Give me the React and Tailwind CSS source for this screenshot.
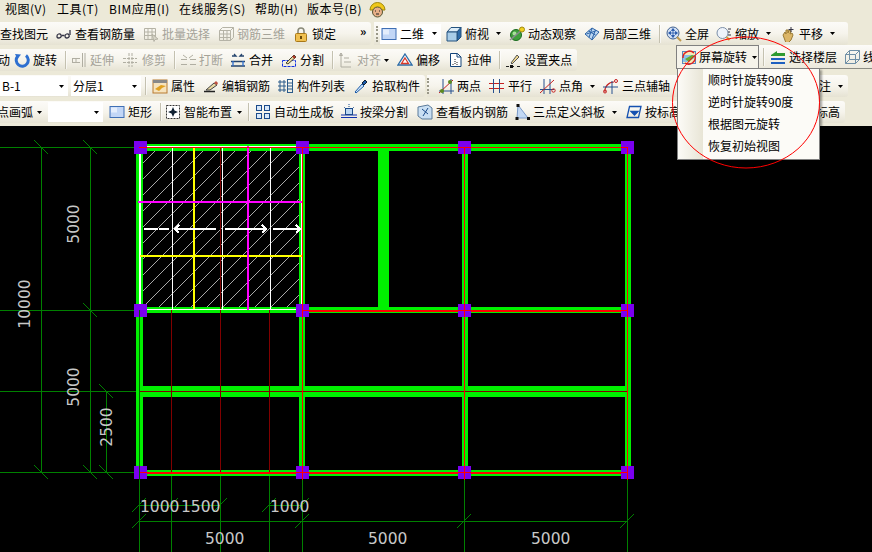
import { useId } from 'react'

const Svg = ({ children, w = 16 }) => (
  <svg width={w} height="16" viewBox={`0 0 ${w} 16`} className="shrink-0 block">{children}</svg>
)

// toolbar icons, drawn by hand since they are old XP style bitmaps
const icons = {
  glasses: <g fill="none" stroke="#334" strokeWidth="1.3"><path d="M1 10c0-2 3-3 4-1s-1 3-2.5 3S1 11 1 10z" /><path d="M9 10c0-2 3-3 4-1s-1 3-2.5 3S9 11 9 10z" /><path d="M5.5 9.5L8.5 9.5M14 9l0-5" /></g>,
  batch: <g fill="none" stroke="#b5b3a6"><path d="M1.5 2.5h11v11h-11zM1.5 6h11M1.5 9.5h11M5 2.5v11M9 2.5v11" /><path d="M9 8l6 5-3 .5-1 2z" fill="#d8d6c8" /></g>,
  rebar3d: <g fill="none" stroke="#b5b3a6"><path d="M1.5 4.5h11v10h-11zM1.5 4.5l3-3h11l-3 3M15.5 1.5v10l-3 3M1.5 8h11M1.5 11.5h11M5.5 4.5v10M9 4.5v10" /></g>,
  lock: <g><path d="M5 8V5a3 3 0 016 0v3" fill="none" stroke="#8a8a7a" strokeWidth="1.6" /><rect x="2.5" y="7.5" width="11" height="8" rx="1" fill="#f0c050" stroke="#a87818" /><rect x="7" y="10" width="2" height="3" fill="#6b4a08" /></g>,
  rect: <g><rect x="1" y="2.5" width="14" height="11" fill="#c2d6f6" stroke="#3f6fb5" /><rect x="2" y="3.5" width="6" height="5" fill="#e4edfc" /></g>,
  cube: <g stroke="#24527f"><path d="M1 6l4-4.500h10L11 6z" fill="#dcecf7" /><path d="M11 6l4-4.500V11l-4 4z" fill="#2e6ba8" /><path d="M1 6h10v9H1z" fill="#a9cde8" /></g>,
  orbit: <g><circle cx="7" cy="9" r="5.500" fill="#3f9f3c" stroke="#1b6a1e" /><circle cx="5.500" cy="7.500" r="2" fill="#a8e09a" /><path d="M1 14L14 3" stroke="#8a8a90" strokeWidth="1.500" /><circle cx="13" cy="3.500" r="2.500" fill="#f0d020" stroke="#a08a10" /></g>,
  local3d: <g fill="#bcd7f2" stroke="#2b62a6"><path d="M1 8l7-6 7 4-7 8z" /><path d="M4.500 5l7 4M8 2.500l-3 9M11.500 4l-3.500 9M2.500 8l9-3" fill="none" /></g>,
  full: <g><circle cx="7" cy="7" r="6" fill="#d5e2f5" stroke="#40608f" /><path d="M11 11l4 4" stroke="#c09a50" strokeWidth="2" /><path d="M7 3v8M3 7h8M7 2.500L5.500 4.500h3zM7 11.500L5.500 9.500h3zM2.500 7l2-1.500v3zM11.500 7l-2-1.500v3z" fill="#2555a8" stroke="#2555a8" strokeWidth=".8" /></g>,
  zoom: <g><circle cx="6.500" cy="7" r="5.500" fill="#eef3fb" stroke="#7c8fa8" /><path d="M10.500 11l3 3" stroke="#d0a040" strokeWidth="2" /><path d="M12 3h3M12 6h2M12 9h3" stroke="#334" strokeWidth="1.200" /></g>,
  pan: <g><path d="M3 9l2-3 1 2V4h2v3l1-3 2 1-1 3 2-1 1 2-2 5-3 3H6z" fill="#dcb667" stroke="#9a7b35" /><path d="M11 1v5M8.500 3.500h5" stroke="#334" strokeWidth="1" /></g>,
  rotate: <g><path d="M3.500 4.500A6 6 0 1 0 12 3.500" fill="none" stroke="#2e6fd0" strokeWidth="3" /><path d="M1 2l6 .5-3.500 4.500z" fill="#2e6fd0" /></g>,
  extend: <g fill="none" stroke="#b0aea2"><path d="M1 6.500h8M1 10.500h8M1.500 6.500v4M5 6.500v4" /><path d="M11.500 1v14M14 1v14" /></g>,
  trim: <g fill="none" stroke="#b0aea2"><path d="M0 6.500h14M0 10.500h14M6 1v14M9 1v14" strokeDasharray="3 1" /></g>,
  break: <g fill="none" stroke="#b0aea2"><path d="M1 12.500h6M10 12.500h6M1 7.500h6M10 7.500h6M3 3l4 3M13 3l-4 3" /></g>,
  merge: <g fill="none" stroke="#24446e" strokeWidth="1.300"><path d="M1 9.500h14M1 14h14" /><path d="M2 4h4l-2-2M14 4h-4l2-2" /><path d="M3 9v5M13 9v5" stroke="#2e6fd0" /></g>,
  split: <g><rect x="1.500" y="8.500" width="13" height="6" fill="none" stroke="#1030e0" strokeDasharray="3 1" /><path d="M5 11l8-8 2 2-8 7z" fill="#e8d8a0" stroke="#443" /><path d="M12 4l2 2" stroke="#b03020" strokeWidth="2" /></g>,
  align: <g fill="none" stroke="#b0aea2"><path d="M3 1v14h10" /><path d="M3 1L1.500 3.500h3zM6 6h5M6 10h7" fill="#ccc" /></g>,
  offset: <g><path d="M8 2l7 11H1z" fill="#f4f7fb" stroke="#2d6ca8" strokeWidth="1.300" /><path d="M8 6l3.500 5.500h-7z" fill="#fff" stroke="#d83a2a" strokeWidth="1.300" /></g>,
  stretch: <g fill="none" stroke="#14447a"><path d="M2.500 1.500h7l3.500 3.500v9.500h-10.500z" fill="#fff" /><path d="M9 1.500V5h4" /><path d="M7 7v6M9 10v3M5 12v1" stroke="#222" strokeDasharray="1 1" /></g>,
  grip: <g><path d="M1 14.500h3M7 14.500h2M12 14.500h3" stroke="#222" /><rect x="5" y="13" width="3" height="3" fill="#111" /><path d="M6 11l6-8 2 2-7 7z" fill="#f0d890" stroke="#555" /></g>,
  props: <g><rect x="1" y="2" width="14" height="13" fill="#f6e3bd" stroke="#b87a30" /><rect x="1" y="2" width="14" height="3" fill="#888" /><path d="M3 11l6-4 5 1-4 2-3 3z" fill="#e0a020" /></g>,
  edit: <g><path d="M1 13.500h11" stroke="#222" strokeWidth="1.300" /><path d="M3 12l8-7 3 2-7 5z" fill="#e8d8a0" stroke="#444" /><path d="M11 5l3 2 1-2-2-2z" fill="#c05040" /></g>,
  list: <g fill="none" stroke="#2a5a8a"><rect x="9.500" y="1.500" width="5" height="13" /><path d="M1 3h2v2H1zM1 7h2v2H1zM1 11h2v2H1zM5 3h2v2H5zM5 7h2v2H5zM5 11h2v2H5zM9.500 5h5M9.500 8h5M9.500 11h5" /></g>,
  pick: <g><path d="M2 14l7-8 2 2-8 7z" fill="#cfe4f7" stroke="#1b5aa8" /><path d="M9 5l3-3 2 2-3 3z" fill="#1b5aa8" stroke="#123" /></g>,
  twoPt: <g><path d="M1 13h15M5 1v15M13 1v15" stroke="#27508f" /><path d="M1 15L15 2" stroke="#c52020" /><circle cx="4" cy="13" r="2" fill="#5a8a20" /><circle cx="12" cy="4" r="2" fill="#5a8a20" /></g>,
  parallel: <g stroke="#c52020"><path d="M0 5.500h15M0 10.500h15" /><path d="M4.500 1v14M10.500 1v14" stroke="#27508f" /></g>,
  ptAngle: <g><path d="M0 11.500h14M4 1v15M10 1v15" stroke="#27508f" /><path d="M0 15L14 2" stroke="#c52020" /><circle cx="13.500" cy="12.500" r="1.700" fill="none" stroke="#c52020" /></g>,
  axis3: <g fill="none"><path d="M2 14a9 9 0 019-10" stroke="#c52020" strokeWidth="1.200" /><path d="M0 9h15M9 3v13" stroke="#27508f" /><circle cx="2" cy="13.500" r="1.500" stroke="#c52020" /><circle cx="13" cy="3" r="1.500" stroke="#c52020" /></g>,
  smart: <g><rect x="1.500" y="1.500" width="13" height="13" fill="#fff" stroke="#333" strokeDasharray="2 1" /><path d="M8 3l1.500 3.500L13 8l-3.500 1.500L8 13 6.500 9.500 3 8l3.500-1.500z" fill="#123" /></g>,
  auto: <g fill="#d8e8fa" stroke="#1b4a8a"><rect x="1.500" y="1.500" width="5" height="5" /><rect x="9.500" y="1.500" width="5" height="5" /><rect x="1.500" y="9.500" width="5" height="5" /><rect x="9.500" y="9.500" width="5" height="5" /></g>,
  beam: <g><path d="M0 13.500h16M0 11h16" stroke="#1030b0" /><rect x="4.500" y="4.500" width="7" height="6" fill="#bcd7f2" stroke="#1b4a8a" /><path d="M8 0v4M3 3l2 2M13 3l-2 2" stroke="#1b4a8a" strokeDasharray="1 1" /></g>,
  slabRebar: <g><path d="M1 3l10-2 4 3v11H5l-4-3z" fill="#c9dff3" stroke="#5a7a9a" /><path d="M5 5l6 5M11 4l-5 8" stroke="#1b4a8a" /></g>,
  slab3: <g><path d="M4 1l10 13H3z" fill="#c2d8f4" stroke="#7a9aca" /><rect x="2.500" y="0" width="3" height="3" fill="#111" /><rect x="1.500" y="13" width="3" height="3" fill="#111" /><rect x="13" y="13" width="3" height="3" fill="#111" /></g>,
  slope: <g fill="none" stroke="#1450b0" strokeWidth="1.300"><path d="M3.500 2.500H15L12.500 13.500H1z" /><path d="M5 7.500h7L8.500 11z" fill="#1450b0" /></g>,
  screen: <g><rect x="1.500" y="2.500" width="13" height="12" fill="#f7e9b8" stroke="#5a8ac0" /><path d="M2 6h12v3l-8 4H2z" fill="#8ac2e8" /><path d="M4 10l7-4 3 1-6 6z" fill="#6aa830" /><path d="M2 9a6.500 6.500 0 0111-5M14 7a6.500 6.500 0 01-10 7" fill="none" stroke="#e02020" strokeWidth="1.400" /></g>,
  layers: <g><path d="M1 6l6-4v2h8v3H1z" fill="#2e9a30" /><path d="M15 9H1v2h14z" fill="#1d5fc0" /><path d="M1 13h14v2H1z" fill="#1d5fc0" /></g>,
  wire: <g fill="none" stroke="#6f8fa6"><path d="M1.500 5.500h10v9h-10zM1.500 5.500l4-4h10l-4 4M15.500 1.500v9l-4 4M5.500 1.500v9h10M5.500 10.500l-4 4" /></g>,
}

const Icon = ({ name }) => <Svg>{icons[name]}</Svg>

const Arrow = ({ className = '' }) => (
  <svg width="5" height="3" viewBox="0 0 5 3" className={`shrink-0 block ${className}`}><path d="M0 0h5L2.500 3z" fill="#000" /></svg>
)

const Sep = ({ className = '' }) => <div className={`h-[18px] w-[2px] shrink-0 border-l border-[#c4c1b0] bg-white/60 ${className}`} />

const Grip = () => <div className="h-[16px] w-[2px] shrink-0 border-l-2 border-dotted border-[#9a9888]" />

// one icon + label button
function Tool({ icon, label, off, drop, dropClass = 'ml-[7px]', className = '' }) {
  return (
    <div className={`flex items-center shrink-0 whitespace-nowrap ${off ? 'text-[#a5a399]' : 'text-black'} ${className}`}>
      {icon && <span className="mr-[3px]"><Icon name={icon} /></span>}
      <span>{label}</span>
      {drop && <Arrow className={dropClass} />}
    </div>
  )
}

function Combo({ text, className = '' }) {
  return (
    <div className={`flex items-center justify-between h-[20px] bg-white pl-[2px] pr-[4px] shrink-0 ${className}`}>
      <span>{text}</span>
      <Arrow />
    </div>
  )
}

const Bar = ({ children, className = '' }) => (
  <div className={`flex items-center bg-linear-to-b from-[#fcfbf8] via-[#f6f4ec] to-[#e6e3d3] rounded-r-[3px] overflow-hidden ${className}`}>
    {children}
  </div>
)

const menus = [
  ['视图(V)', 'w-[52px]'],
  ['工具(T)', 'w-[52px]'],
  ['BIM应用(I)', 'w-[70px]'],
  ['在线服务(S)', 'w-[76px]'],
  ['帮助(H)', 'w-[52px]'],
  ['版本号(B)', 'w-[62px]'],
]

function Canvas() {
  const id = useId()
  const hatch = []
  for (let s = 306; s < 610; s += 16) hatch.push(s)
  const cols = [
    [136, 7], [299, 6], [462, 6], [625, 6],
  ]
  const beams = [
    [144, 7], [307, 6], [386, 11], [470, 6],
  ]
  const purple = [[134, 141], [296, 141], [458, 141], [621, 141], [134, 304], [296, 304], [458, 304], [621, 304], [134, 466], [296, 466], [458, 466], [621, 466]]
  const ticks = [[41, 147, 1], [90, 147, 1], [90, 310, 1], [41, 472, 1], [90, 472, 1], [106, 391, 1], [106, 472, 1],
    [139, 521, -1], [302, 521, -1], [464, 521, -1], [627, 521, -1], [139, 505, -1], [171, 505, -1], [220, 505, -1], [269, 505, -1], [302, 505, -1]]
  const label = "font-['DejaVu_Sans',sans-serif] text-[15.5px] fill-[#c8c8c8]"

  return (
    <svg width="872" height="426" viewBox="0 126 872 426" className="block bg-black">
      <defs>
        <clipPath id={id}><rect x="143" y="151" width="156" height="156" /></clipPath>
      </defs>
      <g shapeRendering="crispEdges">
        {/* dimension lines */}
        <g stroke="#008000" fill="none">
          <path d="M0 147.500H139M0 310.500H139M0 391.500H139M0 472.500H139M41.500 147V472M90.500 147V472M106.500 391V472" />
          <path d="M139 521.500H627M139 505.500H221M269 505.500H303" />
          <path d="M139.500 472V552M171.500 472V552M220.500 472V552M269.500 472V552M302.500 472V552M464.500 472V552M627.500 472V552" />
          {ticks.map(([x, y, d]) => <path key={`${x}-${y}`} d={`M${x - 7} ${y - 7 * d}L${x + 7} ${y + 7 * d}`} />)}
        </g>
        {/* walls */}
        {cols.map(([x, w]) => <rect key={x} x={x} y="144" width={w} height="332" fill="#00f000" />)}
        {beams.map(([y, h]) => <rect key={y} x="136" y={y} width="495" height={h} fill="#00f000" />)}
        <rect x="378" y="151" width="11" height="156" fill="#00f000" />
        {/* slab area */}
        <g clipPath={`url(#${id})`} stroke="#a8a8a8">
          {hatch.map((s) => <path key={s} d={`M${s - 100} 100L${s - 400} 400`} />)}
        </g>
        {/* axes */}
        <g stroke="#800000" fill="none">
          <path d="M171.500 310V472M220.500 147V472M269.500 310V472M139 391.500H627" />
        </g>
        <g stroke="#ff0000" fill="none">
          <path d="M302 310.500H627M139 472.500H627" strokeWidth="2" />
        </g>
        <g stroke="#fff" fill="none">
          <path d="M140 146.500H302M140 309.500H302M172.500 147V309M222 147V309M270.500 147V309" />
          <path d="M140 147V309M302 147V309" strokeWidth="2" />
        </g>
        <path d="M194 148V309M140 256H302" stroke="#ffff00" strokeWidth="2" fill="none" />
        <path d="M248 146V310M138 202H302" stroke="#ff00ff" strokeWidth="2" fill="none" />
        <path d="M144 229H158M159 229H169M176 229H216M225 229H265M273 229H299" stroke="#fff" strokeWidth="2" fill="none" />
        <path d="M179 225L175 229L179 233M262 225L266 229L262 233M296 225L300 229L296 233" stroke="#fff" strokeWidth="2" fill="none" />
        {purple.map(([x, y]) => <rect key={`${x}-${y}`} x={x} y={y} width="13" height="13" fill="#7b00f0" />)}
        {/* thin axis lines run over the columns */}
        <path d="M302.500 147V480M464.500 147V480M627.500 147V480M139 147.500H627M303 310.500H627M139 472.500H627" stroke="#ff0000" fill="none" />
        <path d="M139.500 310V480" stroke="#006000" />
      </g>
      {/* dimension text */}
      <text x="74" y="224" textAnchor="middle" dominantBaseline="central" transform="rotate(-90 74 224)" className={label}>5000</text>
      <text x="25" y="304" textAnchor="middle" dominantBaseline="central" transform="rotate(-90 25 304)" className={label}>10000</text>
      <text x="74" y="387" textAnchor="middle" dominantBaseline="central" transform="rotate(-90 74 387)" className={label}>5000</text>
      <text x="107" y="427" textAnchor="middle" dominantBaseline="central" transform="rotate(-90 107 427)" className={label}>2500</text>
      <text x="140" y="512" className={label}>1000</text>
      <text x="181" y="512" className={label}>1500</text>
      <text x="270" y="512" className={label}>1000</text>
      <text x="205" y="544" className={label}>5000</text>
      <text x="368" y="544" className={label}>5000</text>
      <text x="531" y="544" className={label}>5000</text>
    </svg>
  )
}

export default function App() {
  return (
    <div className="relative w-[872px] h-[552px] overflow-hidden bg-[#ece9d8] text-[12px] leading-none text-black font-['Noto_Sans_CJK_SC','Liberation_Sans',sans-serif]">
      {/* Menu */}
      <div className="flex items-center h-[22px] pl-[5px] pb-[6px] pt-[2px]">
        {menus.map(([m, w]) => <span key={m} className={`${w} whitespace-nowrap tracking-[0.5px]`}>{m}</span>)}
        <svg width="17" height="18" viewBox="0 0 17 18" className="block mt-[1px]">
          <path d="M1 9a7.500 7.500 0 0115 0z" fill="#f0c818" stroke="#a08808" />
          <circle cx="8.500" cy="11" r="5" fill="#e8b088" stroke="#553" />
          <path d="M6 10h1M10 10h1M7 13h3" stroke="#222" />
        </svg>
      </div>

      {/* Row 1 */}
      <div className="flex h-[27px]">
        <Bar className="h-[23px] w-[371px] gap-[8px]">
          <Tool label="查找图元" />
          <Tool icon="glasses" label="查看钢筋量" />
          <Tool icon="batch" label="批量选择" off />
          <Tool icon="rebar3d" label="钢筋三维" off />
          <Tool icon="lock" label="锁定" />
          <span className="ml-[16px] mb-[6px] font-bold">»</span>
        </Bar>
        <Bar className="h-[23px] w-[474px] ml-[3px] pl-[2px] gap-[8px]">
          <Grip />
          <div className="flex items-center h-[20px] w-[61px] bg-white pl-[1px] pr-[4px] shrink-0 ml-[-6px] justify-between">
            <span className="flex items-center gap-[3px]"><Icon name="rect" />二维</span>
            <Arrow />
          </div>
          <Tool icon="cube" label="俯视" drop className="ml-[-3px]" />
          <Tool icon="orbit" label="动态观察" />
          <Tool icon="local3d" label="局部三维" />
          <Sep />
          <Tool icon="full" label="全屏" className="ml-[-3px]" />
          <Tool icon="zoom" label="缩放" drop className="ml-[-1px]" />
          <Tool icon="pan" label="平移" drop className="ml-[1px]" />
        </Bar>
      </div>

      {/* Row 2 */}
      <div className="flex h-[26px]">
        <Bar className="h-[22px] w-[577px]">
          <span className="w-[10px] overflow-hidden shrink-0 flex justify-end whitespace-nowrap">移动</span>
          <Tool icon="rotate" label="旋转" className="ml-[4px]" />
          <Sep className="ml-[8px]" />
          <Tool icon="extend" label="延伸" off className="ml-[4px]" />
          <Tool icon="trim" label="修剪" off className="ml-[9px]" />
          <Sep className="ml-[8px]" />
          <Tool icon="break" label="打断" off className="ml-[4px]" />
          <Tool icon="merge" label="合并" className="ml-[7px]" />
          <Tool icon="split" label="分割" className="ml-[8px]" />
          <Sep className="ml-[8px]" />
          <Tool icon="align" label="对齐" off drop dropClass="ml-[3px]" className="ml-[4px]" />
          <Tool icon="offset" label="偏移" className="ml-[8px]" />
          <Tool icon="stretch" label="拉伸" className="ml-[8px]" />
          <Sep className="ml-[8px]" />
          <Tool icon="grip" label="设置夹点" className="ml-[4px]" />
        </Bar>
        <div className="relative ml-[99px] flex h-[24px] w-[196px] mt-[-4px] items-center bg-linear-to-b from-[#fcfbf8] to-[#ece9dc] border-b border-[#8c8c84]">
          {/* open menu button + its dropdown */}
          <div className="flex items-center h-[24px] w-[83px] shrink-0 pl-[4px] border border-b-0 border-[#808080] bg-[#f5f3ea]">
            <span className="mr-[2px]"><Icon name="screen" /></span>
            <span className="whitespace-nowrap">屏幕旋转</span>
            <Arrow className="ml-[5px]" />
          </div>
          <Sep className="ml-[4px]" />
          <Tool icon="layers" label="选择楼层" className="ml-[5px]" />
          <Tool icon="wire" label="线" className="ml-[7px]" />
          <div className="absolute z-10 left-[1px] top-[23px] w-[143px] h-[92px] flex border border-[#808080] bg-[#fcfbf7] shadow-[2px_2px_2px_rgba(0,0,0,0.35)]">
            <div className="w-[25px] shrink-0 bg-linear-to-r from-[#fcfbf7] to-[#e8e5d6]" />
            <div className="flex flex-col pl-[5px]">
              {['顺时针旋转90度', '逆时针旋转90度', '根据图元旋转', '恢复初始视图'].map((t) => (
                <div key={t} className="flex items-center h-[22px] whitespace-nowrap">{t}</div>
              ))}
            </div>
          </div>
        </div>
      </div>

      {/* Row 3 */}
      <div className="flex h-[26px]">
        <Bar className="h-[22px] w-[425px]">
          <Combo text="B-1" className="w-[68px]" />
          <Combo text="分层1" className="w-[70px] ml-[3px]" />
          <Sep className="ml-[4px]" />
          <Tool icon="props" label="属性" className="ml-[5px]" />
          <Tool icon="edit" label="编辑钢筋" className="ml-[8px]" />
          <Tool icon="list" label="构件列表" className="ml-[8px]" />
          <Tool icon="pick" label="拾取构件" className="ml-[8px]" />
        </Bar>
        <Bar className="h-[22px] w-[421px] ml-[2px]">
          <Grip />
          <Tool icon="twoPt" label="两点" className="ml-[9px]" />
          <Tool icon="parallel" label="平行" className="ml-[8px]" />
          <Tool icon="ptAngle" label="点角" drop className="ml-[8px]" />
          <Tool icon="axis3" label="三点辅轴" className="ml-[8px]" />
          <Tool label="标注" drop className="ml-auto mr-[5px]" />
        </Bar>
      </div>

      {/* Row 4 */}
      <div className="flex h-[25px]">
        <Bar className="h-[22px] w-[845px]">
          <span className="w-[33px] overflow-hidden shrink-0 flex justify-end whitespace-nowrap">三点画弧</span>
          <Arrow className="ml-[4px]" />
          <Combo text="" className="w-[55px] ml-[6px]" />
          <Tool icon="rect" label="矩形" className="ml-[6px]" />
          <Sep className="ml-[8px]" />
          <Tool icon="smart" label="智能布置" drop dropClass="ml-[5px]" className="ml-[3px]" />
          <Sep className="ml-[6px]" />
          <Tool icon="auto" label="自动生成板" className="ml-[5px]" />
          <Tool icon="beam" label="按梁分割" className="ml-[7px]" />
          <Tool icon="slabRebar" label="查看板内钢筋" className="ml-[9px]" />
          <Tool icon="slab3" label="三点定义斜板" drop className="ml-[6px]" />
          <Tool icon="slope" label="按标高" className="ml-[9px]" />
          <Tool label="标高" className="ml-auto mr-[5px]" />
        </Bar>
      </div>

      <Canvas />

      {/* red callout circle drawn on top of the screenshot */}
      <svg width="872" height="552" className="absolute inset-0 z-20 pointer-events-none">
        <ellipse cx="746" cy="102.500" rx="73.500" ry="65.500" fill="none" stroke="#ff0000" />
      </svg>
    </div>
  )
}
